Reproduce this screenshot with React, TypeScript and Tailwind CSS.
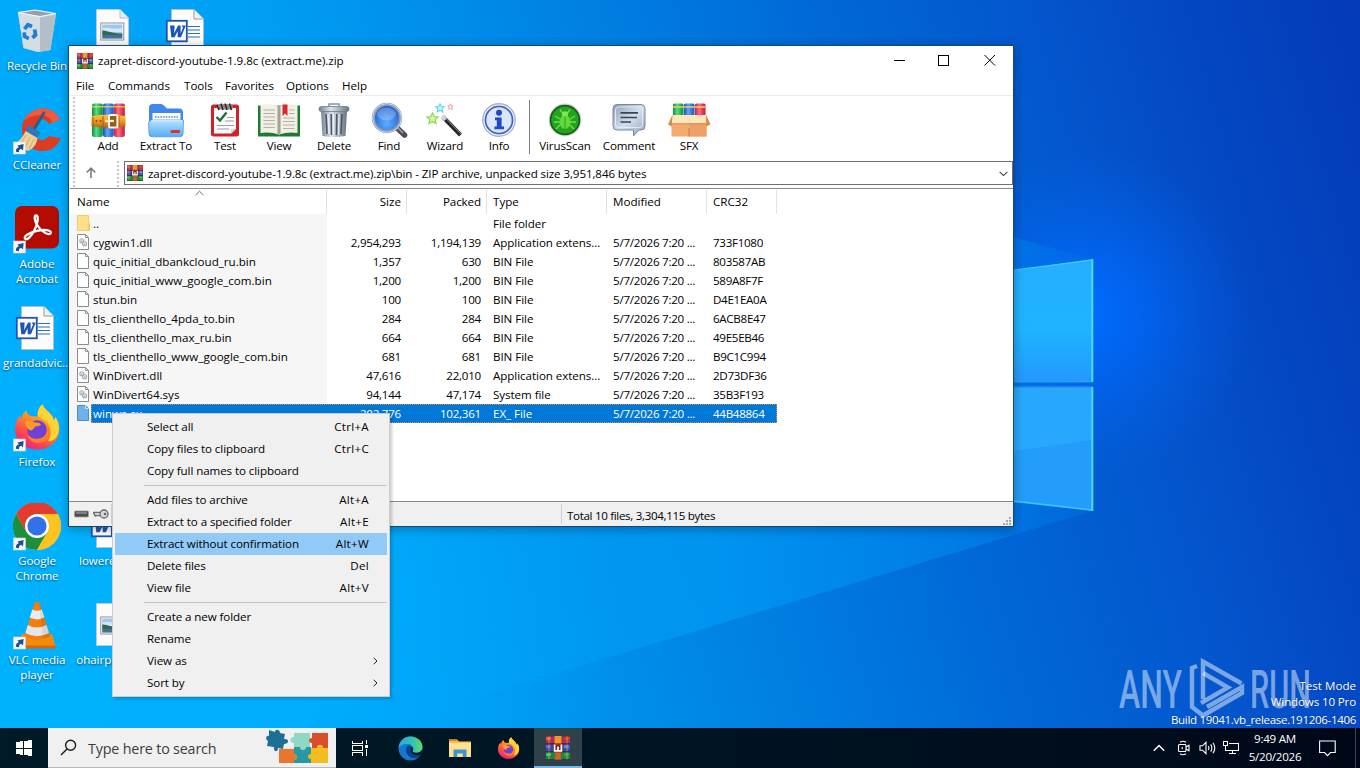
import React from "react";

type SvgProps = { className?: string };

/* ---------- desktop wallpaper ---------- */

function Wallpaper() {
  return (
    <svg className="absolute inset-0" width="1360" height="728" viewBox="0 0 1360 728">
      <defs>
        <linearGradient id="wpBase" x1="0" y1="0.15" x2="1" y2="0">
          <stop offset="0" stopColor="#00acfb" />
          <stop offset="0.2" stopColor="#009ff4" />
          <stop offset="0.45" stopColor="#007fe1" />
          <stop offset="0.62" stopColor="#0067d6" />
          <stop offset="0.77" stopColor="#0455cd" />
          <stop offset="0.88" stopColor="#0446c2" />
          <stop offset="1" stopColor="#043ab6" />
        </linearGradient>
        <radialGradient id="wpGlow" gradientUnits="userSpaceOnUse" cx="1085" cy="315" r="165">
          <stop offset="0" stopColor="#006cff" stopOpacity="1" />
          <stop offset="0.35" stopColor="#0068fa" stopOpacity="0.7" />
          <stop offset="1" stopColor="#0560e8" stopOpacity="0" />
        </radialGradient>
        <radialGradient id="wpLeft" gradientUnits="userSpaceOnUse" cx="0" cy="600" r="620">
          <stop offset="0" stopColor="#00b6ff" stopOpacity="1" />
          <stop offset="0.5" stopColor="#00b0ff" stopOpacity="0.85" />
          <stop offset="1" stopColor="#00a4fa" stopOpacity="0" />
        </radialGradient>
        <linearGradient id="wpBeam" gradientUnits="userSpaceOnUse" x1="400" y1="0" x2="1093" y2="0">
          <stop offset="0" stopColor="#00a8fa" stopOpacity="0.2" />
          <stop offset="0.45" stopColor="#009cf5" stopOpacity="0.7" />
          <stop offset="0.85" stopColor="#0080ea" stopOpacity="0.7" />
          <stop offset="1" stopColor="#0070e6" stopOpacity="0.4" />
        </linearGradient>
        <linearGradient id="wpPane" x1="0" y1="0" x2="0" y2="1">
          <stop offset="0" stopColor="#27adff" />
          <stop offset="0.55" stopColor="#1fb4ff" />
          <stop offset="1" stopColor="#2399ff" />
        </linearGradient>
      </defs>
      <rect width="1360" height="728" fill="url(#wpBase)" />
      <rect width="1360" height="728" fill="url(#wpLeft)" />
      <rect width="1360" height="728" fill="url(#wpGlow)" />
      <path d="M1093 259 L300 41 L0 300 L0 728 L375 728 L1093 511 Z" fill="url(#wpBeam)" />
      <path d="M900 288 L1093 259 L1093 382 L900 381 Z" fill="url(#wpPane)" />
      <path d="M900 387 H1093 V511 L900 490 Z" fill="#239cfb" />
      <path d="M900 467 L1093 440 V387 H900 Z" fill="#28a8fd" />
      <path d="M900 381.5 H1092 V260 L900 285" fill="none" stroke="#3cc8ff" strokeWidth="1.4" />
      <path d="M900 387.5 H1092 V510 L900 488" fill="none" stroke="#3cc4ff" strokeWidth="1.4" />
      <path d="M900 381 H1092 M900 387.5 H1092" stroke="#2a92f2" strokeWidth="1.6" />
      <path d="M1092.4 259 V382 M1092.4 387 V511" stroke="#45dcff" strokeWidth="1.8" />
    </svg>
  );
}

/* ---------- desktop icons ---------- */

function ShortcutArrow() {
  return (
    <g>
      <rect x="0.5" y="35" width="12" height="12" fill="#f6f6f6" stroke="#d5d5d5" strokeWidth="0.6" />
      <path d="M3 44.8 C2.6 42 4 40.6 6 40.2 L4.4 38.4 L10.6 37 L10 43.4 L8.2 41.8 C6.4 42.2 5.8 43.4 6 45.2 Z" fill="#1b4f8f" />
    </g>
  );
}

function RecycleBin() {
  return (
    <svg width="48" height="48" viewBox="0 0 48 48">
      <path d="M5 4 L24 2 L43 6 L37.5 42 L24 44 L10.5 40 Z" fill="#c9d6de" fillOpacity="0.9" />
      <path d="M27 8 L43 6 L37.5 42 L27 44 Z" fill="#b3bfc8" />
      <path d="M5 5 L27 8.5 L27 44 L10.5 40 Z" fill="#d5dde3" />
      <path d="M5 4.6 L22 2 L43 5.6 L27 8.6 Z" fill="#94a1ab" stroke="#eef3f6" strokeWidth="1.2" />
      <g fill="none" stroke="#1c7fd6" strokeWidth="3.8">
        <path d="M11.5 21 L15 16.8 L19 18.6" />
        <path d="M21.6 21.5 L22.6 27 L19.4 29.8" />
        <path d="M15.8 30.6 L11.5 28.4 L11.2 24.4" />
      </g>
    </svg>
  );
}

function CCleaner() {
  return (
    <svg width="48" height="48" viewBox="0 0 48 48">
      <path d="M47 12.5 C43 4 35 1 28.5 1.5 C17 2.5 9 11 9 22 C9 35 18 44 29 44 C38 44 45 39.5 47.5 31 L35.5 29 C33 33 29 33.5 26.5 32.5 C19 29 19 17 26 13.5 C30 11.5 34 13 36 17 Z" fill="#dd3b24" />
      <path d="M47 12.5 C43 4 35 1 28.5 1.5 C20 2.2 13 7.5 10.4 14.6 C20 5 38 6 39 16 Z" fill="#ef5a3e" />
      <path d="M30.5 4 L20 21 L22.5 23 L32.5 6 Z" fill="#2e5c8a" />
      <path d="M15.5 18 L27.5 25.5 L24 31.5 L12.5 24 Z" fill="#2d78b8" />
      <path d="M12.5 24 L24.5 31 C24 37 20 42 15 44 L0 37 C6 35 10 30 12.5 24 Z" fill="#f0cf9a" />
      <path d="M13 28 L7 38 M17 30 L12 41 M21 32 L16 42" stroke="#cfa668" strokeWidth="0.9" />
      <ShortcutArrow />
    </svg>
  );
}

function Acrobat() {
  return (
    <svg width="48" height="48" viewBox="0 0 48 48">
      <rect x="2" y="0" width="44" height="42.5" rx="7" fill="#b30b00" />
      <path d="M12.4 33 C9.4 31 16 26.5 24 24.8 C31 23.3 38.4 24 37.8 27 C36.8 30.5 28 26 23.8 18.5 C21.5 14 20.8 9.5 23.2 9.5 C26 9.5 25 18 20.5 26 C17.5 31 14 34.5 12.4 33 Z" fill="none" stroke="#ffffff" strokeWidth="2.3" />
      <ShortcutArrow />
    </svg>
  );
}

function WordDoc() {
  return (
    <svg width="48" height="48" viewBox="0 0 48 48">
      <path d="M8.5 1.5 H31 L40.5 11 V44.5 H8.5 Z" fill="#fdfdfd" stroke="#b6bcc4" strokeWidth="0.9" />
      <path d="M31 1.5 V11 H40.5" fill="#f0f2f5" stroke="#8f98a3" strokeWidth="1" />
      <path d="M25 18.5 H37 M25 22 H37 M25 25.5 H37 M25 29 H37" stroke="#2b6cc4" strokeWidth="1.2" />
      <rect x="3.8" y="12.8" width="20" height="20.5" fill="#ffffff" stroke="#1f55ae" strokeWidth="1.8" />
      <path d="M7 17.6 H11.6 L11.2 25.2 L15 17.6 H17.6 L17.7 25.2 L20 19.4 L18.6 17.6 H22.8 L18 29.2 H14.7 L14.6 23.2 L11.6 29.2 H8.3 Z" fill="#1f55ae" />
    </svg>
  );
}

function ImageDoc() {
  return (
    <svg width="48" height="48" viewBox="0 0 48 48">
      <path d="M8.5 1.5 H32 L40.5 10 V43.5 H8.5 Z" fill="#fbfbfb" stroke="#c3c8ce" strokeWidth="0.9" />
      <path d="M32 1.5 V10 H40.5" fill="#e9ecef" stroke="#b3bac2" strokeWidth="0.9" />
      <rect x="12.8" y="15" width="23" height="17" fill="#fff" stroke="#8a9199" strokeWidth="1" />
      <rect x="14.3" y="16.5" width="20" height="14" fill="#9cc6ea" />
      <path d="M14.3 21 C18 18 25 22 34.3 20 V24 H14.3 Z" fill="#d3e7f6" />
      <path d="M14.3 22.5 C19 22 22 25.5 34.3 25.6 V27.5 H14.3 Z" fill="#35664f" />
      <path d="M14.3 27 H34.3 V30.5 H14.3 Z" fill="#41729a" />
    </svg>
  );
}

function FirefoxArt() {
  return (
    <g>
      <path d="M24 45.5 C11 45.5 2 36.5 2 25.5 C2 18 5 13.5 7.5 11.5 C7.5 13 8 14.5 8.6 15 C9 10.5 11.5 7.5 13.5 6.5 C13.8 9 15 11 17.5 12 L25 12.5 C24 8 26 3 29.5 0.5 C31 5 36.5 8 39 12 C40.2 13.8 40.6 15.3 40.6 16.5 C42 15.5 42.3 14 42.2 12.8 C45 16.5 46.3 21 46.3 25 C46.3 37 36.5 45.5 24 45.5 Z" fill="url(#ffBody)" />
      <path d="M29.5 0.5 C31 5 36.5 8 39 12 C40.2 13.8 40.6 15.3 40.6 16.5 C42 15.5 42.3 14 42.2 12.8 C45.2 17 46.4 22 45.8 27 C44 35 39 38 35 37 C40 30 39 18 25 12.5 C24 8 26 3 29.5 0.5 Z" fill="#ffd432" />
      <circle cx="24" cy="26" r="9.8" fill="#7040d8" />
      <path d="M12 18 C16 15 19 16 21.5 18.5 C26 18.3 28 20 28 20.5 C27 22 24 22 22.5 22.5 C21 23.5 20.5 25.5 18.5 26.5 C15 26 13 23 12 18 Z" fill="#ff9a28" />
      <path d="M31 19 C34 21 35 26 33 30 C30 35.5 21 37 14.5 31 C17 41 31 42 36.5 33 C39 28 36 21 31 19 Z" fill="#ff7f2a" />
    </g>
  );
}

function FirefoxDefs() {
  return (
    <defs>
      <linearGradient id="ffBody" x1="0.8" y1="0" x2="0.25" y2="1">
        <stop offset="0" stopColor="#ffcf30" />
        <stop offset="0.45" stopColor="#ff8a24" />
        <stop offset="0.75" stopColor="#ff4450" />
        <stop offset="1" stopColor="#e3208a" />
      </linearGradient>
    </defs>
  );
}

function Firefox() {
  return (
    <svg width="48" height="48" viewBox="0 0 48 48">
      <FirefoxDefs />
      <FirefoxArt />
      <ShortcutArrow />
    </svg>
  );
}

function Chrome() {
  return (
    <svg width="48" height="48" viewBox="0 0 48 48">
      <circle cx="24" cy="23" r="24" fill="#fcc934" />
      <path d="M3.2 11 A24 24 0 0 1 44.8 11 L24 11 L24 23 L13.6 29 Z" fill="#e33b2e" />
      <path d="M3.2 11 A24 24 0 0 0 24 47 L34.4 29 L24 23 L13.6 29 Z" fill="#1e8e3e" />
      <path d="M44.8 11 H24 V23 L34.4 29 L24 47 A24 24 0 0 0 44.8 11 Z" fill="#fcc421" />
      <circle cx="24" cy="23" r="12" fill="#fff" />
      <circle cx="24" cy="23" r="9.6" fill="#3171ea" />
      <ShortcutArrow />
    </svg>
  );
}

function Vlc() {
  return (
    <svg width="48" height="48" viewBox="0 0 48 48">
      <path d="M9 32 L39 32 L43 46 H5 Z" fill="#f58a0c" />
      <path d="M5 43.5 H43 V46.5 H5 Z" fill="#d9680a" />
      <path d="M21.5 1 Q24 -2 26.5 1 L37 34 Q24 42 11.5 34 Z" fill="#f47d11" />
      <path d="M19.3 7.6 Q24 10 28.7 7.6 L31.4 15.6 Q24 19.2 16.8 15.6 Z" fill="#e9edf0" />
      <path d="M14.8 23 Q24 28 33.4 23 L36 31 Q24 37.6 12.4 31 Z" fill="#e3e7ea" />
      <path d="M26 0.6 L37 34 Q35 36 30 37 Z" fill="#000" fillOpacity="0.08" />
      <ShortcutArrow />
    </svg>
  );
}

function DesktopItem({ icon, label }: { icon?: React.ReactNode; label?: string }) {
  return (
    <div className="flex h-[99px] shrink-0 flex-col items-center">
      <div className="mb-[2px] h-12 w-12">{icon}</div>
      {label && (
        <div className="whitespace-pre text-center text-[11.6px] leading-[15px] tracking-[-0.04px] text-white [text-shadow:0_1px_2px_rgba(0,0,0,0.65)]">
          {label}
        </div>
      )}
    </div>
  );
}

function DesktopIcons() {
  return (
    <div className="absolute left-0 top-0 flex pt-2">
      <div className="flex w-[74px] flex-col">
        <DesktopItem icon={<RecycleBin />} label="Recycle Bin" />
        <DesktopItem icon={<CCleaner />} label="CCleaner" />
        <DesktopItem icon={<Acrobat />} label={"Adobe\nAcrobat"} />
        <DesktopItem icon={<WordDoc />} label="grandadvic..." />
        <DesktopItem icon={<Firefox />} label="Firefox" />
        <DesktopItem icon={<Chrome />} label={"Google\nChrome"} />
        <DesktopItem icon={<Vlc />} label={"VLC media\nplayer"} />
      </div>
      <div className="flex w-[75px] flex-col">
        <DesktopItem icon={<ImageDoc />} />
        <DesktopItem />
        <DesktopItem />
        <DesktopItem />
        <DesktopItem />
        <DesktopItem icon={<WordDoc />} label="lowerexpe..." />
        <DesktopItem icon={<ImageDoc />} label="ohairprojec..." />
      </div>
      <div className="flex w-[75px] flex-col">
        <DesktopItem icon={<WordDoc />} />
      </div>
    </div>
  );
}

/* ---------- archive icons ---------- */

function RarSmall({ className }: SvgProps) {
  return (
    <svg className={className} viewBox="0 0 24 24">
      <rect width="24" height="24" fill="#2a2430" />
      <rect x="0" y="0.3" width="24" height="7" fill="#b02a5c" />
      <rect x="0" y="1" width="5" height="3" fill="#ee5a3c" />
      <rect x="18" y="1" width="6" height="3" fill="#d8382e" />
      <rect x="0" y="8.3" width="24" height="7" fill="#3a45a8" />
      <rect x="0" y="9.3" width="5" height="2.6" fill="#6a6ae0" />
      <rect x="18" y="9.3" width="5" height="2.8" fill="#4a8cf0" />
      <rect x="0" y="16.3" width="24" height="7" fill="#1c8446" />
      <rect x="0" y="17.3" width="5" height="2.6" fill="#4cc46a" />
      <rect x="18" y="17.3" width="5" height="2.6" fill="#35a858" />
      <path d="M3 0.3 V7.3 M3 8.3 V15.3 M3 16.3 V23.3 M21 0.3 V7.3 M21 8.3 V15.3 M21 16.3 V23.3" stroke="#e6b23c" strokeWidth="1" opacity="0.7" />
      <rect x="8.6" y="0" width="6.8" height="24" fill="#a8521e" />
      <rect x="8.6" y="0" width="6.8" height="7" fill="#f0982c" />
      <rect x="9.4" y="17" width="5.2" height="6" fill="#c06a26" />
      <rect x="7.2" y="8.4" width="9.6" height="7.4" fill="#7a2420" />
      <path d="M8.6 8.6 V14.8 H15.4 V8.6 M12 10.4 V14.6" fill="none" stroke="#fff" strokeWidth="1.7" />
    </svg>
  );
}

function AddIcon() {
  return (
    <svg width="36" height="36" viewBox="0 0 36 36">
      <defs>
        <linearGradient id="bkG" x1="0" x2="1"><stop offset="0" stopColor="#128a3a" /><stop offset="0.4" stopColor="#4fe08a" /><stop offset="1" stopColor="#0f8a34" /></linearGradient>
        <linearGradient id="bkB" x1="0" x2="1"><stop offset="0" stopColor="#1a4fb0" /><stop offset="0.4" stopColor="#63a2f8" /><stop offset="1" stopColor="#1b55bd" /></linearGradient>
        <linearGradient id="bkR" x1="0" x2="1"><stop offset="0" stopColor="#c81f3e" /><stop offset="0.4" stopColor="#ff6a86" /><stop offset="1" stopColor="#c41836" /></linearGradient>
        <linearGradient id="bkBelt" x1="0" y1="0" x2="0" y2="1"><stop offset="0" stopColor="#ffc63d" /><stop offset="0.5" stopColor="#f29a1c" /><stop offset="1" stopColor="#b4641a" /></linearGradient>
      </defs>
      <rect x="2" y="1.5" width="10.8" height="33.5" rx="2" fill="url(#bkG)" />
      <rect x="13" y="1.5" width="10.8" height="33.5" rx="2" fill="url(#bkB)" />
      <rect x="24" y="1.5" width="10.8" height="33.5" rx="2" fill="url(#bkR)" />
      <path d="M2 4.8 H12.8 M13 4.8 H23.8 M24 4.8 H34.8" stroke="#e8d24a" strokeWidth="1.5" opacity="0.85" />
      <path d="M2 14 H34.8" stroke="#5a4020" strokeWidth="0.8" opacity="0.6" />
      <path d="M1.5 14 Q18 11.5 35.5 14 V24.5 Q18 26.5 1.5 24.5 Z" fill="url(#bkBelt)" />
      <path d="M3 15 V24 M13 14 V25 M29 14 V25" stroke="#a0601c" strokeWidth="1.1" />
      <circle cx="6.5" cy="19" r="1.1" fill="#8a4a10" />
      <circle cx="10.5" cy="19" r="1.1" fill="#8a4a10" />
      <rect x="19" y="13" width="8.4" height="12.4" rx="1.5" fill="#9a5a1c" stroke="#fbf6e6" strokeWidth="2" />
      <path d="M15 19 H24" stroke="#fff3c4" strokeWidth="2.2" />
    </svg>
  );
}

function ExtractIcon() {
  return (
    <svg width="38" height="36" viewBox="0 0 38 36">
      <defs>
        <linearGradient id="fdF" x1="0" y1="0" x2="0" y2="1"><stop offset="0" stopColor="#b4e2ff" /><stop offset="1" stopColor="#56aef4" /></linearGradient>
      </defs>
      <path d="M2 6 Q2 2 6 2 H14 Q16 2 18 4.5 L20 6.5 H32 Q36 6.5 36 10.5 V22 H2 Z" fill="#3f86ee" />
      <path d="M5.5 11 H33.5 V22 H5.5 Z" fill="#fafdff" />
      <path d="M8 15 H31" stroke="#8ca0b4" strokeWidth="2" strokeDasharray="1.5 1.2" />
      <path d="M1.5 20 Q4 17.5 8 18 H36.5 L36 32 Q35.8 34.8 33 34.8 H5 Q2.2 34.8 2 32 Z" fill="url(#fdF)" stroke="#4a98e8" strokeWidth="0.8" />
      <path d="M4 18.8 H35.6" stroke="#e8f6ff" strokeWidth="1" />
      <rect x="23.5" y="28" width="9.5" height="3" rx="1" fill="#e2322c" />
    </svg>
  );
}

function TestIcon() {
  return (
    <svg width="32" height="36" viewBox="0 0 32 36">
      <rect x="2" y="2.5" width="28" height="32" rx="2.5" fill="#d32027" />
      <path d="M5 6 H27 V27 L22 31.5 H5 Z" fill="#fbfbfb" />
      <path d="M22 31.5 V27 H27 Z" fill="#d7d7d7" />
      <rect x="8" y="2.5" width="16" height="5" rx="2" fill="#8a8a8e" />
      <path d="M8 3 L10 8 M12 1.5 L14 8 M16 1.5 L18 8 M20.5 1.5 L22.5 8" stroke="#302020" strokeWidth="1.4" />
      <path d="M7.5 15 L11 18.5 L17.5 10.5" fill="none" stroke="#1d6a38" strokeWidth="2.3" />
      <path d="M18 15.5 H25 M16 19 H25 M8 23.5 H25 M8 27 H20" stroke="#9aa0a6" strokeWidth="1.1" />
    </svg>
  );
}

function ViewIcon() {
  return (
    <svg width="44" height="36" viewBox="0 0 44 36">
      <path d="M1 3.5 H43 V34.5 H1 Z" fill="#1d7a33" />
      <path d="M3.5 3 Q13 1 22 4 Q31 1 40.5 3 V31 Q31 29.5 22 32.5 Q13 29.5 3.5 31 Z" fill="#f1efe6" />
      <path d="M20 3.4 V31.8 L22 32.5 L24 31.8 V3.4 L22 4 Z" fill="#c9c6b8" />
      <path d="M22 4 V32" stroke="#8d8a7c" strokeWidth="1.2" />
      <path d="M6.5 8 H18 M6.5 11.5 H18 M6.5 15 H18 M6.5 18.5 H18 M6.5 22 H18 M6.5 25.5 H18 M26 16 H37.5 M26 19.5 H37.5 M26 23 H37.5 M26 26.5 H37.5 M32 8 H37.5 M32 11.5 H37.5" stroke="#b4b2a6" strokeWidth="1" />
      <path d="M25.5 2.5 H30.5 V14 L28 11.5 L25.5 14 Z" fill="#d8262b" />
    </svg>
  );
}

function DeleteIcon() {
  return (
    <svg width="34" height="36" viewBox="0 0 34 36">
      <defs>
        <linearGradient id="tr" x1="0" x2="1"><stop offset="0" stopColor="#73818f" /><stop offset="0.4" stopColor="#dde5ec" /><stop offset="1" stopColor="#66747f" /></linearGradient>
      </defs>
      <path d="M4 9 H30 L28.5 34 Q17 36 5.5 34 Z" fill="url(#tr)" />
      <path d="M9 12 L10 32 M14.2 12 L14.5 33 M19.8 12 L19.5 33 M25 12 L24 32" stroke="#4a5868" strokeWidth="1.6" />
      <path d="M11 12 L12 32 M16.4 12 V33 M22 12 L21.6 33" stroke="#eef3f7" strokeWidth="1.1" />
      <rect x="2" y="4.5" width="30" height="5" rx="2.3" fill="url(#tr)" stroke="#6c7a8a" strokeWidth="0.8" />
      <path d="M12 4.5 V2 H22 V4.5" fill="none" stroke="#8794a2" strokeWidth="1.5" />
    </svg>
  );
}

function FindIcon() {
  return (
    <svg width="38" height="36" viewBox="0 0 38 36">
      <defs>
        <radialGradient id="fnd" cx="0.5" cy="0.7" r="0.7"><stop offset="0" stopColor="#5ab0ff" /><stop offset="1" stopColor="#1a52c4" /></radialGradient>
      </defs>
      <path d="M25 24 L34.5 33" stroke="#4a4f58" strokeWidth="5.5" strokeLinecap="round" />
      <path d="M26.5 24.5 L33 31" stroke="#9aa2ad" strokeWidth="1.6" />
      <circle cx="17" cy="16" r="13.6" fill="url(#fnd)" stroke="#8b9cb6" strokeWidth="3.2" />
      <circle cx="17" cy="16" r="14.4" fill="none" stroke="#d6e0ee" strokeWidth="0.9" />
      <ellipse cx="16.5" cy="12" rx="9.5" ry="6.5" fill="#fff" fillOpacity="0.25" />
    </svg>
  );
}

function WizardIcon() {
  const star = "M0 -5 L1.5 -1.7 L5 -1.4 L2.4 1 L3.2 4.6 L0 2.8 L-3.2 4.6 L-2.4 1 L-5 -1.4 L-1.5 -1.7 Z";
  return (
    <svg width="38" height="36" viewBox="0 0 38 36">
      <path d="M17 15 L34.5 33" stroke="#26262a" strokeWidth="4" />
      <path d="M16 14 L19.6 17.7" stroke="#d5d5d8" strokeWidth="4" />
      <path d="M20 16.5 L35 32" stroke="#8d8d92" strokeWidth="1" />
      <path d={star} transform="translate(6.5 16.5) scale(1.1)" fill="#d5f7a8" stroke="#8fdc58" strokeWidth="1.2" />
      <path d={star} transform="translate(14 6) scale(0.85)" fill="#c8f4fb" stroke="#5bd0e6" strokeWidth="1.2" />
      <path d={star} transform="translate(24.5 4.8) scale(0.55)" fill="#fff" stroke="#f08a94" strokeWidth="1.6" />
    </svg>
  );
}

function InfoIcon() {
  return (
    <svg width="36" height="36" viewBox="0 0 36 36">
      <circle cx="18" cy="18" r="16.2" fill="#fff" stroke="#a6b2d2" strokeWidth="1.4" />
      <circle cx="18" cy="18" r="13.6" fill="#d9e6fb" stroke="#4167bd" strokeWidth="1.8" />
      <circle cx="18" cy="10.8" r="3" fill="#1d49c8" />
      <path d="M14 15.5 H20.6 V24.5 H23 V27.3 H13.4 V24.5 H15.8 V18.2 H14 Z" fill="#1d49c8" />
    </svg>
  );
}

function VirusIcon() {
  return (
    <svg width="36" height="36" viewBox="0 0 36 36">
      <circle cx="18" cy="18" r="16.4" fill="#cfd8cf" />
      <circle cx="18" cy="18" r="15.3" fill="#1c5a22" />
      <circle cx="18" cy="18" r="13.6" fill="#22a51e" />
      <g stroke="#74dc4a" strokeWidth="1.4" fill="none">
        <path d="M13 17 L8 14 M13 20 H7 M13.5 22.5 L9 27 M23 17 L28 14 M23 20 H29 M22.5 22.5 L27 27 M15.5 11 L13 7.5 M20.5 11 L23 7.5" />
      </g>
      <ellipse cx="18" cy="20" rx="5.4" ry="7" fill="#62d83a" />
      <circle cx="18" cy="12.3" r="3" fill="#82e458" />
      <path d="M18 14 V27" stroke="#2a9a28" strokeWidth="0.9" />
    </svg>
  );
}

function CommentIcon() {
  return (
    <svg width="36" height="36" viewBox="0 0 36 36">
      <defs>
        <linearGradient id="cmt" x1="0" y1="0" x2="1" y2="1"><stop offset="0" stopColor="#8b9db5" /><stop offset="0.5" stopColor="#d3dfed" /><stop offset="1" stopColor="#92a3bb" /></linearGradient>
      </defs>
      <path d="M6 2.5 H30 Q34 2.5 34 6.5 V24 Q34 28 30 28 H28 L22.5 34 V28 H6 Q2 28 2 24 V6.5 Q2 2.5 6 2.5 Z" fill="url(#cmt)" stroke="#7789a2" strokeWidth="1" />
      <rect x="4.5" y="5" width="27" height="20.5" rx="3" fill="none" stroke="#e6edf5" strokeWidth="0.9" />
      <path d="M9.5 10.8 H27 M9.5 15.5 H26 M9.5 20 H20" stroke="#3b4452" strokeWidth="1.7" />
    </svg>
  );
}

function SfxIcon() {
  return (
    <svg width="44" height="36" viewBox="0 0 44 36">
      <rect x="6" y="1.5" width="10.5" height="18" rx="1.5" fill="url(#bkG)" />
      <rect x="17" y="1.5" width="10.5" height="18" rx="1.5" fill="url(#bkB)" />
      <rect x="28" y="1.5" width="10.5" height="18" rx="1.5" fill="url(#bkR)" />
      <path d="M6 5 H16.5 M17 5 H27.5 M28 5 H38.5" stroke="#f0cf50" strokeWidth="1.6" />
      <path d="M5 13 L39.5 13 L38.5 22 H6 Z" fill="#ffe7ba" />
      <path d="M4.5 21.5 H39.5 V34.5 H4.5 Z" fill="#f3aa72" />
      <path d="M22 21.5 H39.5 V34.5 H22 Z" fill="#eea068" />
      <path d="M5.5 12.5 L1 22.5 L5 24.5 Z M39 12.5 L43.5 22.5 L39 24.5 Z" fill="#dd8c48" />
      <path d="M5 21.8 H39" stroke="#d98a4c" strokeWidth="1" />
      <path d="M22 26 V34.5" stroke="#c77a40" strokeWidth="1" />
    </svg>
  );
}

/* ---------- archive window ---------- */

function ToolButton({ w, icon, label }: { w: string; icon: React.ReactNode; label: string }) {
  return (
    <div className={`flex shrink-0 flex-col items-center ${w}`}>
      <div className="flex h-9 items-center">{icon}</div>
      <div className="whitespace-nowrap leading-4 tracking-[-0.15px]">{label}</div>
    </div>
  );
}

function TitleBar() {
  return (
    <div className="flex h-[30px] shrink-0 items-center pl-[7px]">
      <RarSmall className="h-4 w-4" />
      <div className="ml-[5px] flex-1 whitespace-nowrap tracking-[-0.05px]">zapret-discord-youtube-1.9.8c (extract.me).zip</div>
      <svg width="136" height="30" viewBox="0 0 136 30" fill="none" stroke="#000" shapeRendering="crispEdges">
        <path d="M17 14.5 H28" />
        <rect x="61.5" y="9.5" width="10" height="10" />
        <path d="M107.5 9 L118 19.5 M118 9 L107.5 19.5" shapeRendering="auto" />
      </svg>
    </div>
  );
}

function MenuBar() {
  return (
    <div className="flex h-5 shrink-0 items-center border-b border-[#ececec] pl-[6px]">
      <span className="w-8">File</span>
      <span className="w-[76px]">Commands</span>
      <span className="w-[41px]">Tools</span>
      <span className="w-[61px]">Favorites</span>
      <span className="w-14">Options</span>
      <span>Help</span>
    </div>
  );
}

function ToolBar() {
  return (
    <div className="flex h-[63px] shrink-0 items-start pt-[6px]">
      <div className="-mt-[5px] ml-[3px] mr-[6px] h-[62px] w-0 border-l-2 border-dotted border-[#c4c4c4]" />
      <ToolButton w="w-[54px]" icon={<AddIcon />} label="Add" />
      <ToolButton w="w-[62px]" icon={<ExtractIcon />} label="Extract To" />
      <ToolButton w="w-[56px]" icon={<TestIcon />} label="Test" />
      <ToolButton w="w-[52px]" icon={<ViewIcon />} label="View" />
      <ToolButton w="w-[58px]" icon={<DeleteIcon />} label="Delete" />
      <ToolButton w="w-[52px]" icon={<FindIcon />} label="Find" />
      <ToolButton w="w-[60px]" icon={<WizardIcon />} label="Wizard" />
      <ToolButton w="w-[48px]" icon={<InfoIcon />} label="Info" />
      <div className="-mt-[2px] ml-[6px] mr-[4px] h-[54px] w-px bg-[#7d7d7d]" />
      <ToolButton w="w-[62px]" icon={<VirusIcon />} label="VirusScan" />
      <ToolButton w="w-[66px]" icon={<CommentIcon />} label="Comment" />
      <ToolButton w="w-[54px]" icon={<SfxIcon />} label="SFX" />
    </div>
  );
}

function AddressBar() {
  return (
    <div className="flex h-[30px] shrink-0 items-start border-b border-[#8a8a8a] pt-[2px]">
      <div className="ml-[3px] h-[26px] w-0 border-l-2 border-dotted border-[#c4c4c4]" />
      <svg width="32" height="24" viewBox="0 0 32 24" fill="none" stroke="#7b7b7b" strokeWidth="1.6">
        <path d="M16 17 V7.5 M11.7 11.5 L16 7.2 L20.3 11.5" />
      </svg>
      <div className="ml-[10px] h-[26px] w-0 border-l-2 border-dotted border-[#c4c4c4]" />
      <div className="ml-[5px] flex h-6 flex-1 items-center border border-[#6f6f6f] pl-[2px] pr-[4px]">
        <RarSmall className="h-4 w-4" />
        <span className="ml-[5px] flex-1 whitespace-nowrap pt-px tracking-[-0.1px]">
          zapret-discord-youtube-1.9.8c (extract.me).zip\bin - ZIP archive, unpacked size 3,951,846 bytes
        </span>
        <svg className="mt-px" width="9" height="6" viewBox="0 0 9 6" fill="none" stroke="#404040" strokeWidth="1.1">
          <path d="M0.6 0.8 L4.5 4.6 L8.4 0.8" />
        </svg>
      </div>
    </div>
  );
}

type Kind = "folder" | "dll" | "bin" | "selected";

function FileGlyph({ kind }: { kind: Kind }) {
  if (kind === "folder") {
    return (
      <svg className="h-4 w-[14px] shrink-0" viewBox="0 0 14 16">
        <path d="M0.5 0.5 H11.5 V8 H12.6 V15.5 H0.5 Z" fill="#ffe08a" stroke="#efcb62" strokeWidth="0.9" />
        <path d="M10.5 9 H12.6 V15.3 H10.5 Z" fill="#f0c030" fillOpacity="0.5" />
      </svg>
    );
  }
  const on = kind === "selected";
  return (
    <svg className="h-4 w-[14px] shrink-0" viewBox="0 0 14 16">
      <path
        d="M0.5 0.5 H8.5 L11.5 3.5 V15.5 H0.5 Z"
        fill={on ? "#6fb2ea" : "#fdfdfd"}
        stroke={on ? "#4e8fca" : "#8b8b8b"}
        strokeWidth="1"
      />
      <path d="M8.5 0.5 V3.5 H11.5" fill="none" stroke={on ? "#d5e9fa" : "#8b8b8b"} strokeWidth="0.9" />
      {kind === "dll" && (
        <g fill="none" stroke="#a3a8ab" strokeWidth="1.1">
          <circle cx="4.8" cy="6.8" r="2" />
          <circle cx="7.6" cy="9.8" r="2" />
          <circle cx="4.8" cy="6.8" r="0.3" />
          <circle cx="7.6" cy="9.8" r="0.3" />
        </g>
      )}
    </svg>
  );
}

const rows: [Kind, string, string, string, string, string][] = [
  ["folder", "..", "", "", "File folder", ""],
  ["dll", "cygwin1.dll", "2,954,293", "1,194,139", "Application extens...", "733F1080"],
  ["bin", "quic_initial_dbankcloud_ru.bin", "1,357", "630", "BIN File", "803587AB"],
  ["bin", "quic_initial_www_google_com.bin", "1,200", "1,200", "BIN File", "589A8F7F"],
  ["bin", "stun.bin", "100", "100", "BIN File", "D4E1EA0A"],
  ["bin", "tls_clienthello_4pda_to.bin", "284", "284", "BIN File", "6ACB8E47"],
  ["bin", "tls_clienthello_max_ru.bin", "664", "664", "BIN File", "49E5EB46"],
  ["bin", "tls_clienthello_www_google_com.bin", "681", "681", "BIN File", "B9C1C994"],
  ["dll", "WinDivert.dll", "47,616", "22,010", "Application extens...", "2D73DF36"],
  ["dll", "WinDivert64.sys", "94,144", "47,174", "System file", "35B3F193"],
  ["selected", "winws.ex_", "202,776", "102,361", "EX_ File", "44B48864"],
];

function FileList() {
  return (
    <div className="relative flex flex-1 flex-col">
      <div className="absolute inset-y-0 left-0 -z-10 w-[257px] bg-[#f6f6f6]" />
      <div className="flex h-[25px] shrink-0 bg-white pt-px">
        <div className="relative flex w-[257px] items-center border-r border-[#e2e2e2] pl-[7px]">
          Name
          <svg className="absolute left-[125px] top-0" width="9" height="6" viewBox="0 0 9 6" fill="none" stroke="#6b6b6b">
            <path d="M0.6 5 L4.5 1.2 L8.4 5" />
          </svg>
        </div>
        <div className="flex w-20 items-center justify-end border-r border-[#e2e2e2] pr-[5px]">Size</div>
        <div className="flex w-20 items-center justify-end border-r border-[#e2e2e2] pr-[5px] tracking-[-0.1px]">Packed</div>
        <div className="flex w-[120px] items-center border-r border-[#e2e2e2] pl-[6px]">Type</div>
        <div className="flex w-[100px] items-center border-r border-[#e2e2e2] pl-[6px]">Modified</div>
        <div className="flex w-[70px] items-center border-r border-[#e2e2e2] pl-[6px]">CRC32</div>
      </div>
      {rows.map(([kind, name, size, packed, type, crc]) => (
        <div key={name} className="flex h-[19px] shrink-0 items-center whitespace-nowrap">
          <div className="-mt-px ml-[7px] h-4 w-[14px]">
            <FileGlyph kind={kind} />
          </div>
          <div
            className={
              kind === "selected"
                ? "flex h-[19px] w-[686px] items-center bg-[#0078d7] text-white outline-1 -outline-offset-1 outline-dotted outline-[#e08a3c]"
                : "flex h-[19px] w-[686px] items-center"
            }
          >
            <span className="w-[236px] pl-[2px]">{name}</span>
            <span className="w-[74px] text-right tracking-[-0.25px]">{size}</span>
            <span className="w-20 text-right tracking-[-0.25px]">{packed}</span>
            <span className="ml-3 w-[120px] tracking-[-0.06px]">{type}</span>
            <span className="w-[100px] tracking-[-0.25px]">{kind === "folder" ? "" : "5/7/2026 7:20 ..."}</span>
            <span className="tracking-[-0.3px]">{crc}</span>
          </div>
        </div>
      ))}
    </div>
  );
}

function StatusBar() {
  return (
    <div className="-ml-px flex h-[25px] shrink-0 items-center border-t border-[#8a8a8a] bg-[#f0f0f0] pl-px">
      <svg className="ml-1" width="36" height="14" viewBox="0 0 36 14">
        <rect x="0.5" y="4" width="14" height="6" rx="1" fill="#4c4c50" stroke="#a0a0a0" strokeWidth="0.8" />
        <path d="M2 6 H13" stroke="#b5b5b5" />
        <path d="M19 5.5 H27 M20 8.5 H27 M19.5 6.2 L22 9.5" stroke="#707070" strokeWidth="1.3" fill="none" />
        <circle cx="30" cy="7" r="4" fill="#d8d8d8" stroke="#6a6a6a" strokeWidth="1.3" />
        <circle cx="31" cy="7" r="1.3" fill="#666" />
      </svg>
      <div className="ml-[1px] h-5 w-px bg-[#d0d0d0]" />
      <div className="ml-[449px] h-5 w-px bg-[#d0d0d0]" />
      <div className="ml-[5px] flex-1 pt-[3px] tracking-[-0.33px]">Total 10 files, 3,304,115 bytes</div>
      <svg className="mr-[1px] self-end" width="10" height="10" viewBox="0 0 10 10" fill="#a8a8a8">
        <path d="M7 1h2v2h-2z M4 4h2v2h-2z M7 4h2v2h-2z M1 7h2v2h-2z M4 7h2v2h-2z M7 7h2v2h-2z" />
      </svg>
    </div>
  );
}

function ArchiveWindow() {
  return (
    <div className="absolute left-[68px] top-[45px] isolate flex h-[482px] w-[946px] flex-col border border-[#16486f] bg-white pl-px text-[#000] shadow-[0_2px_10px_rgba(0,0,0,0.3)]">
      <TitleBar />
      <MenuBar />
      <ToolBar />
      <AddressBar />
      <FileList />
      <StatusBar />
    </div>
  );
}

/* ---------- context menu ---------- */

type Entry = { label: string; key?: string; sub?: boolean; hot?: boolean } | null;

const entries: Entry[] = [
  { label: "Select all", key: "Ctrl+A" },
  { label: "Copy files to clipboard", key: "Ctrl+C" },
  { label: "Copy full names to clipboard" },
  null,
  { label: "Add files to archive", key: "Alt+A" },
  { label: "Extract to a specified folder", key: "Alt+E" },
  { label: "Extract without confirmation", key: "Alt+W", hot: true },
  { label: "Delete files", key: "Del" },
  { label: "View file", key: "Alt+V" },
  null,
  { label: "Create a new folder" },
  { label: "Rename" },
  { label: "View as", sub: true },
  { label: "Sort by", sub: true },
];

function ContextMenu() {
  return (
    <div className="absolute left-[112px] top-[413px] flex h-[284px] w-[278px] flex-col border border-[#cccccc] bg-[#f0f0f0] px-[2px] py-[2px] text-[#000] shadow-[2px_2px_3px_rgba(0,0,0,0.2)]">
      {entries.map((e, i) =>
        e === null ? (
          <div key={i} className="ml-[29px] flex h-[7px] shrink-0 items-center">
            <div className="h-px flex-1 bg-[#c6c6c6]" />
          </div>
        ) : (
          <div
            key={i}
            className={
              e.hot
                ? "flex h-[22px] shrink-0 items-center justify-between bg-[#91c9f7] pl-8 pr-[18px]"
                : "flex h-[22px] shrink-0 items-center justify-between pl-8 pr-[18px]"
            }
          >
            <span className="tracking-[-0.09px]">{e.label}</span>
            {e.key && <span className="tracking-[0.3px]">{e.key}</span>}
            {e.sub && (
              <svg className="-mr-[9px]" width="5" height="8" viewBox="0 0 5 8" fill="none" stroke="#222">
                <path d="M0.7 0.8 L4 4 L0.7 7.2" />
              </svg>
            )}
          </div>
        ),
      )}
    </div>
  );
}

/* ---------- watermark ---------- */

function Watermark() {
  return (
    <div className="absolute bottom-0 right-[4px] flex h-[76px] w-[240px] flex-col">
      <svg className="absolute left-0 top-0" width="240" height="76" viewBox="1116 652 240 76">
        <g fill="#ffffff" fillOpacity="0.48" fontFamily="Roboto, sans-serif" fontSize="53" fontWeight="500">
          <text x="1119" y="708" textLength="63" lengthAdjust="spacingAndGlyphs">ANY</text>
          <text x="1250" y="708" textLength="61" lengthAdjust="spacingAndGlyphs">RUN</text>
        </g>
        <g fill="none" stroke="#ffffff" strokeOpacity="0.48" strokeWidth="4.4">
          <path d="M1197 666 L1192 668 V707 L1203 715.5 L1242 693 V687 L1207 707" />
          <path d="M1203 699 V661.5 L1241.5 683.5" />
          <path d="M1203 673 L1228 687.5 L1201 703" />
        </g>
      </svg>
      <div className="relative mt-[25px] flex flex-col items-end text-[11.6px] text-white [text-shadow:0_0_1px_rgba(0,0,0,0.4)]">
        <div className="h-4 leading-[18px]">Test Mode</div>
        <div className="h-[17px] leading-[18px] tracking-[-0.15px]">Windows 10 Pro</div>
        <div className="h-4 whitespace-nowrap leading-[20px] tracking-[-0.35px]">Build 19041.vb_release.191206-1406</div>
      </div>
    </div>
  );
}

/* ---------- taskbar ---------- */

function PuzzleArt() {
  return (
    <svg className="ml-auto mr-[6px]" width="64" height="38" viewBox="0 0 64 38">
      <path d="M3 1 L9 3 C9 0 14 0 14 4 L19 5 L18 10 C23 9 24 15 18 15 L17 20 L12 19 C12 24 7 23 8 18 L1 17 L2 12 C-1 11 0 6 3 7 Z" fill="#1d6f96" />
      <path d="M28 4 H44 V18 H40 C40 22 34 22 34 18 H28 V14 C23 14 23 8 28 8 Z" fill="#8ed8c6" />
      <path d="M46 4 H62 V19 H57 C57 15 51 15 51 19 H46 V14 C42 14 42 9 46 9 Z" fill="#da4e2c" />
      <path d="M13 20 H28 V25 C32 25 32 31 28 31 V34 H13 Z" fill="#e8762c" />
      <path d="M28 18 H34 C34 22 40 22 40 18 H45 V34 H28 V31 C32 31 32 25 28 25 Z" fill="#2798a4" />
      <path d="M45 19 H51 C51 15 57 15 57 19 H62 V34 H45 V30 C41 30 41 25 45 25 Z" fill="#f5bc1f" />
    </svg>
  );
}

function TaskSlot({ children, active }: { children: React.ReactNode; active?: boolean }) {
  return (
    <div
      className={
        active
          ? "flex h-10 w-12 items-center justify-center border-b-2 border-[#76b9ed] bg-[#2f4149] pt-[2px]"
          : "flex h-10 w-[49px] items-center justify-center"
      }
    >
      {children}
    </div>
  );
}

function Taskbar() {
  return (
    <div className="flex h-10 shrink-0 items-center bg-linear-to-r from-[#001a27] via-[#001423] to-[#000818] text-white">
      <div className="flex w-12 justify-center">
        <svg width="16" height="16" viewBox="0 0 16 16" fill="#fff" shapeRendering="crispEdges">
          <path d="M0 2 L7 1 V8 H0 Z M8 1 L16 0 V8 H8 Z M0 9 H7 V15 L0 14 Z M8 9 H16 V16 L8 15 Z" />
        </svg>
      </div>
      <div className="flex h-10 w-[288px] items-center border-b border-[#b9b9b9] bg-[#f0f0f0]">
        <svg className="ml-3" width="17" height="17" viewBox="0 0 17 17" fill="none" stroke="#1b1b1b" strokeWidth="1.4">
          <circle cx="10.6" cy="6.3" r="5" />
          <path d="M7 10 L1 16" />
        </svg>
        <span className="ml-[11px] pt-[2px] text-[14.3px] tracking-[-0.17px] text-[#3d3d3d]">Type here to search</span>
        <PuzzleArt />
      </div>
      <TaskSlot>
        <svg className="-ml-[2px]" width="17" height="16" viewBox="0 0 17 16" fill="none" stroke="#fff" strokeWidth="1.1" shapeRendering="crispEdges">
          <path d="M1.5 0.5 V3.5 H11.5 V0.5 M1.5 15.5 V12.5 H11.5 V15.5 M1.5 5.5 H11.5 V10.5 H1.5 Z M15.5 0 V4 M15.5 9 V16" />
          <rect x="14" y="5" width="3" height="3" fill="#fff" stroke="none" />
        </svg>
      </TaskSlot>
      <TaskSlot>
        <svg className="ml-[2px]" width="25" height="25" viewBox="0 0 24 24">
          <defs>
            <linearGradient id="edA" x1="0" y1="0" x2="1" y2="0"><stop offset="0" stopColor="#2aa7e6" /><stop offset="0.6" stopColor="#33c4b4" /><stop offset="1" stopColor="#66d85c" /></linearGradient>
          </defs>
          <circle cx="12" cy="12" r="11.5" fill="#1279cf" />
          <path d="M0.6 11.5 C1 5 6 0.5 12 0.5 C19 0.5 23.5 5.5 23.5 10.5 C23.5 14 21 16 17.5 16 C14.5 16 13.5 14.8 14.3 13.6 C15.5 12 14.5 8 9.5 7.6 C5 7.3 1.8 9.5 0.6 11.5 Z" fill="url(#edA)" />
          <path d="M9.6 9.3 C6 12 7.5 20 15 21.4 C18 21.6 20.5 20 22 18.2 C18.5 19.8 13.5 19 12 14.5 C11.4 12.6 12 11 12.8 10.4 C12 9.5 10.8 9 9.6 9.3 Z" fill="#0f3f93" />
          <path d="M14.3 13.6 C13.5 14.8 14.5 16 17.5 16 C20.5 16 22.6 14.6 23.3 12.5 L23.2 14.5 C22.8 16.4 22.4 17.4 22 18.2 C18.5 19.8 13.5 19 12 14.5 C11.6 12.8 12 11.2 12.8 10.4 C14.6 11 15 12.6 14.3 13.6 Z" fill="#06202f" />
        </svg>
      </TaskSlot>
      <TaskSlot>
        <svg className="ml-[2px]" width="22" height="20" viewBox="0 0 22 20">
          <path d="M0 1.5 H8 L10 3.5 H22 V19 H0 Z" fill="#f7c552" />
          <path d="M0 5 H22 V19 H0 Z" fill="#ffe08c" />
          <path d="M0 1.5 H8 L9.5 3.2 H0 Z" fill="#d68f28" />
          <path d="M4.5 19 V11.5 H17.5 V19 H13.8 V15.5 H8.2 V19 Z" fill="#3c94d6" />
        </svg>
      </TaskSlot>
      <TaskSlot>
        <svg className="ml-[2px]" width="23" height="23" viewBox="0 0 48 48">
          <FirefoxArt />
        </svg>
      </TaskSlot>
      <div className="w-[2px]" />
      <TaskSlot active>
        <RarSmall className="h-6 w-6" />
      </TaskSlot>
      <div className="ml-auto flex items-center">
        <svg width="12" height="8" viewBox="0 0 12 8" fill="none" stroke="#fff" strokeWidth="1.4">
          <path d="M0.8 6.8 L6 1.4 L11.2 6.8" />
        </svg>
        <svg className="ml-3" width="14" height="16" viewBox="0 0 14 16" fill="none" stroke="#fff" strokeWidth="1.1">
          <rect x="1.5" y="4.5" width="7.5" height="7" rx="1" />
          <path d="M9 7 L12 5.3 V10.7 L9 9 M3 2.2 Q6 0.2 9 2.2 M3 13.8 Q6 15.8 9 13.8 M5.2 7 V9.2" />
        </svg>
        <svg className="ml-2" width="18" height="14" viewBox="0 0 18 14" fill="none" stroke="#fff" strokeWidth="1.1">
          <path d="M1 4.8 H3.5 L7 1.3 V12.7 L3.5 9.2 H1 Z M9.3 5 Q10.5 7 9.3 9 M11.7 3.4 Q14 7 11.7 10.6 M14 1.8 Q17.6 7 14 12.2" />
        </svg>
        <svg className="ml-[6px]" width="17" height="14" viewBox="0 0 17 14" fill="none" stroke="#fff" strokeWidth="1.1" shapeRendering="crispEdges">
          <path d="M5.5 2.5 H15.5 V9.5 H3.5 M9.5 9.5 V12.5 M6 12.5 H13 M0.5 0.5 H4.5 V4.5 H0.5 Z M2.5 4.5 V9.5 H5" />
        </svg>
        <div className="ml-[6px] flex w-[58px] flex-col items-center whitespace-nowrap text-[11.6px] leading-[18px] tracking-[-0.25px]">
          <span>9:49 AM</span>
          <span>5/20/2026</span>
        </div>
        <svg className="ml-[15px]" width="17" height="17" viewBox="0 0 17 17" fill="none" stroke="#fff" strokeWidth="1.1">
          <path d="M0.6 1 H16.2 V12.5 H11.4 L8.5 15.6 L5.6 12.5 H0.6 Z" />
        </svg>
        <div className="ml-[19px] mr-1 h-10 w-px bg-[#3d4656]" />
      </div>
    </div>
  );
}

export default function App() {
  return (
    <div className="relative flex h-[768px] w-[1360px] flex-col overflow-hidden bg-[#0078d7] font-['Open_Sans','Noto_Sans',sans-serif] text-[11.6px]">
      <div className="relative flex-1 overflow-hidden">
        <Wallpaper />
        <DesktopIcons />
        <Watermark />
        <ArchiveWindow />
        <ContextMenu />
      </div>
      <Taskbar />
    </div>
  );
}
